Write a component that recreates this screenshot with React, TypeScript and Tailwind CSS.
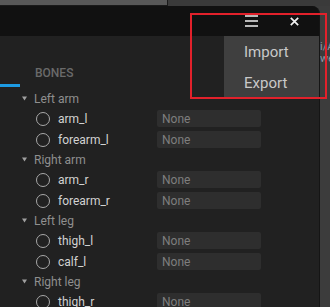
import React from "react";

type Group = { name: string; items: string[] };

const groups: Group[] = [
  { name: "Left arm", items: ["arm_l", "forearm_l"] },
  { name: "Right arm", items: ["arm_r", "forearm_r"] },
  { name: "Left leg", items: ["thigh_l", "calf_l"] },
  { name: "Right leg", items: ["thigh_r"] },
];

function Triangle() {
  return (
    <svg width="5" height="5" viewBox="0 0 5 5" className="block">
      <polygon points="0,0.5 5,0.5 2.5,4.5" fill="#a0a0a0" />
    </svg>
  );
}

export default function App() {
  return (
    <div className="relative w-[330px] h-[307px] overflow-hidden bg-[#3c3c3c] font-['Roboto',sans-serif] flex flex-col">
      {/* top strip of the window behind */}
      <div className="h-[6px] flex shrink-0">
        <div className="w-[168px] h-full bg-[#585858] border-r border-b border-[#1a1a1a]" />
        <div className="flex-1 h-full bg-[#3a3a3a]" />
      </div>

      <div className="flex flex-1 min-h-0">
        {/* panel */}
        <div className="w-[320px] shrink-0 flex flex-col rounded-tr-[8px] overflow-hidden border-r border-[#151515] bg-[#212121]">
          <div className="h-[30px] shrink-0 bg-[#111111] flex items-center justify-end pr-[20px] gap-[32px]">
            <svg width="13" height="12" viewBox="0 0 13 12" className="block">
              <rect x="0" y="0" width="13" height="2" fill="#b8b8b8" />
              <rect x="0" y="5" width="13" height="2" fill="#b8b8b8" />
              <rect x="0" y="10" width="13" height="2" fill="#b8b8b8" />
            </svg>
            <svg width="9" height="9" viewBox="0 0 9 9" className="block">
              <path d="M0.8 0.8 L8.2 8.2 M8.2 0.8 L0.8 8.2" stroke="#f0f0f0" strokeWidth="1.7" />
            </svg>
          </div>

          <div className="flex flex-1 min-h-0">
            <div className="w-[20px] shrink-0">
              <div className="mt-[48px] h-[3px] bg-[#1d9be3]" />
            </div>
            <div className="flex-1 pt-[30px]">
              <div className="pl-[15px] h-[14px] leading-[14px] text-[12px] font-medium text-[#6a6a6a]">
                BONES
              </div>
              <div className="mt-[9px] flex flex-col">
                {groups.map((g) => (
                  <div key={g.name} className="flex flex-col">
                    <div className="h-[19px] flex items-center pl-[2px]">
                      <Triangle />
                      <span className="ml-[7px] text-[12px] leading-[14px] text-[#8f8f8f]">{g.name}</span>
                    </div>
                    {g.items.map((it) => (
                      <div key={it} className="h-[21px] flex items-center pl-[15.5px]">
                        <div className="w-[14px] h-[14px] rounded-full border-[1.5px] border-[#a8a8a8] shrink-0" />
                        <span className="ml-[8.5px] w-[99px] shrink-0 text-[12px] leading-[14px] text-[#d2d2d2]">{it}</span>
                        <div className="w-[104px] h-[17px] rounded-[2px] bg-[#2e2e2e] flex items-center pl-[5px] text-[12px] leading-[14px] text-[#7e7e7e]">
                          None
                        </div>
                      </div>
                    ))}
                  </div>
                ))}
              </div>
            </div>
          </div>
        </div>

        {/* background area on the right */}
        <div className="flex-1 pt-[35px] text-[11px] leading-[12px] text-[#8c9aa8] whitespace-nowrap overflow-hidden">
          <div>i/A</div>
          <div>we</div>
        </div>
      </div>

      {/* dropdown menu */}
      <div className="absolute left-[224px] top-[36px] w-[95px] h-[62px] bg-[#3f3f3f] flex flex-col">
        <div className="h-[31px] flex items-center pl-[20px] pt-[2px] text-[15px] text-[#c9c9c9]">Import</div>
        <div className="h-[31px] flex items-center pl-[20px] pt-[2px] text-[15px] text-[#c9c9c9]">Export</div>
      </div>

      {/* red highlight */}
      <div className="absolute left-[190px] top-[13px] w-[137px] h-[86px] border-2 border-[#e2212b]" />
    </div>
  );
}
